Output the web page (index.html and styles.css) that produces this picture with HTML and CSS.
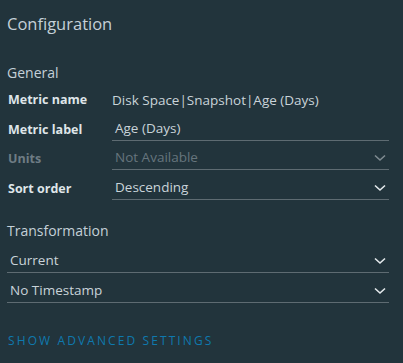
FILE: index.html
```html
<!DOCTYPE html>
<html>
<head>
<meta charset="utf-8">
<link rel="stylesheet" href="styles.css">
</head>
<body>
<div class="panel">
  <h1 class="title">Configuration</h1>
  <h2 class="section">General</h2>
  <div class="form">
    <div class="row">
      <div class="label">Metric name</div>
      <div class="value plain">Disk Space|Snapshot|Age (Days)</div>
    </div>
    <div class="row">
      <div class="label">Metric label</div>
      <div class="value field">Age (Days)</div>
    </div>
    <div class="row">
      <div class="label disabled">Units</div>
      <div class="value field select disabled">Not Available
        <svg class="chev" width="12" height="8" viewBox="0 0 12 8"><path d="M1 1.5 L6 6 L11 1.5" fill="none" stroke="currentColor" stroke-width="1.6"/></svg>
      </div>
    </div>
    <div class="row">
      <div class="label">Sort order</div>
      <div class="value field select">Descending
        <svg class="chev" width="12" height="8" viewBox="0 0 12 8"><path d="M1 1.5 L6 6 L11 1.5" fill="none" stroke="currentColor" stroke-width="1.6"/></svg>
      </div>
    </div>
  </div>
  <h2 class="section trans">Transformation</h2>
  <div class="stack">
    <div class="field select wide">Current
      <svg class="chev" width="12" height="8" viewBox="0 0 12 8"><path d="M1 1.5 L6 6 L11 1.5" fill="none" stroke="currentColor" stroke-width="1.6"/></svg>
    </div>
    <div class="field select wide">No Timestamp
      <svg class="chev" width="12" height="8" viewBox="0 0 12 8"><path d="M1 1.5 L6 6 L11 1.5" fill="none" stroke="currentColor" stroke-width="1.6"/></svg>
    </div>
  </div>
  <a class="advanced">SHOW ADVANCED SETTINGS</a>
</div>
</body>
</html>
```
FILE: styles.css
```css
html, body {
  margin: 0;
  padding: 0;
  background: #22343c;
}
body {
  width: 403px;
  height: 363px;
  overflow: hidden;
  font-family: "Open Sans", "Noto Sans", sans-serif;
  color: #adbbc4;
}
.panel {
  padding: 0 14px 0 7px;
  display: flex;
  flex-direction: column;
}
.title {
  margin: 12px 0 0 0;
  font-size: 16.5px;
  font-weight: 400;
  line-height: 24px;
  color: #c4d0d8;
}
.section {
  margin: 27px 0 0 0;
  font-size: 14px;
  font-weight: 400;
  line-height: 20px;
  color: #c4d0d8;
}
.section.trans {
  margin-top: 21px;
}
.form {
  display: flex;
  flex-direction: column;
  gap: 5.5px;
  margin-top: 4px;
}
.row {
  display: grid;
  grid-template-columns: 105px 1fr;
  align-items: end;
  height: 24px;
}
.label {
  font-size: 12.5px;
  font-weight: 700;
  color: #dfe5e9;
  padding-left: 1px;
  line-height: 22px;
}
.label.disabled {
  color: #6e7c84;
}
.value {
  line-height: 22px;
  color: #c9d3d9;
}
.plain {
  padding-left: 0;
  font-size: 13.5px;
}
.field {
  position: relative;
  border-bottom: 1px solid #5e6b72;
  padding-left: 3px;
  height: 23px;
  line-height: 22px;
  font-size: 13.5px;
  color: #c9d3d9;
}
.field.disabled {
  color: #66757d;
}
.chev {
  position: absolute;
  right: 3px;
  top: 8px;
  color: #e4e9ec;
}
.disabled .chev {
  color: #7f8b91;
}
.stack {
  display: flex;
  flex-direction: column;
  gap: 6px;
  margin-top: 8px;
}
.wide {
  padding-left: 3px;
}
.advanced {
  margin-top: 30px;
  margin-left: 1px;
  font-size: 12px;
  letter-spacing: 2.1px;
  color: #0f79ae;
  line-height: 16px;
}
```
